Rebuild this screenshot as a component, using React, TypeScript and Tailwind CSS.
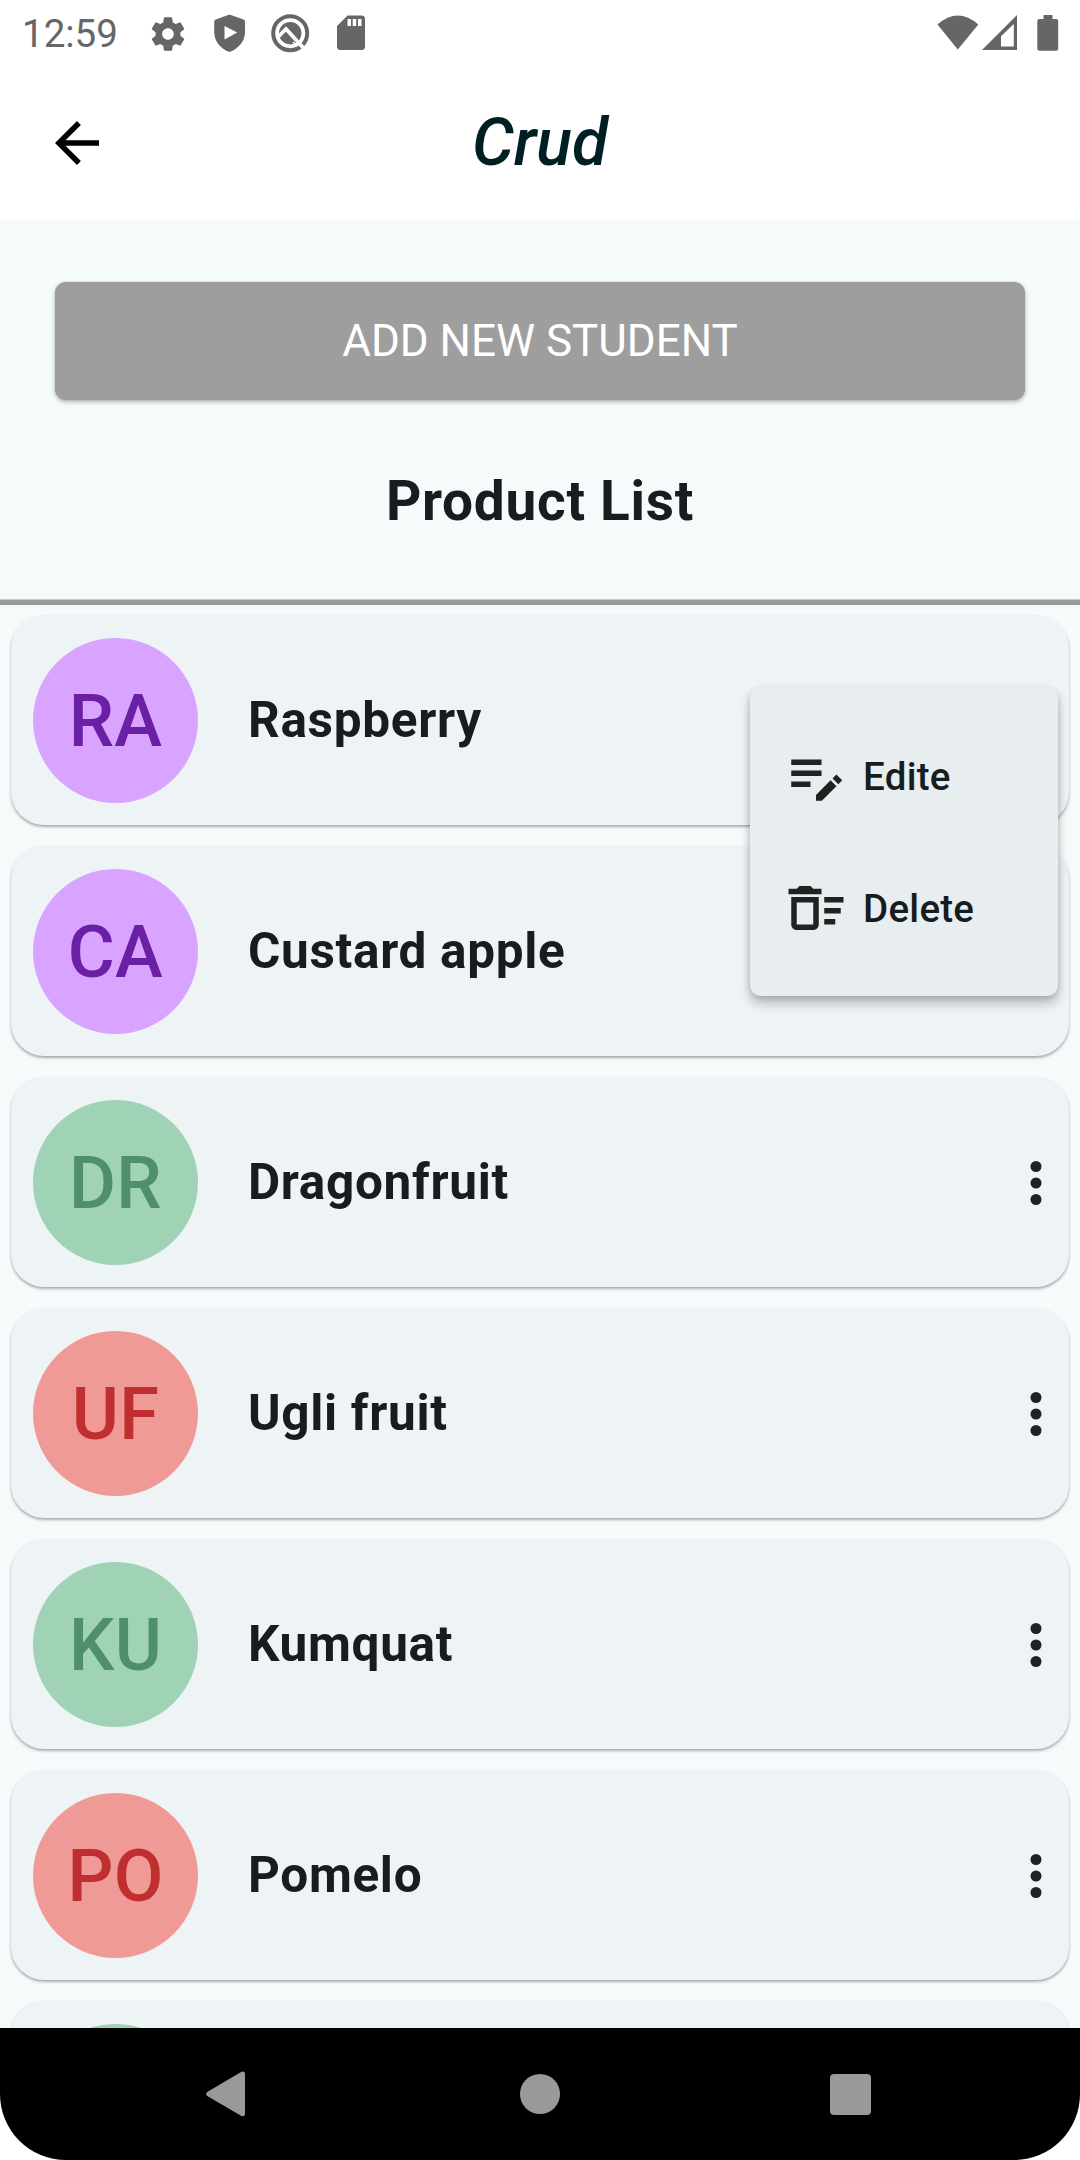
const products = [
  { initials: "RA", name: "Raspberry", tone: "bg-[#d8a4ff] text-[#6b1fa5]", menuOpen: true },
  { initials: "CA", name: "Custard apple", tone: "bg-[#d8a4ff] text-[#6b1fa5]", menuOpen: false },
  { initials: "DR", name: "Dragonfruit", tone: "bg-[#a0d2b5] text-[#4f8f69]", menuOpen: false },
  { initials: "UF", name: "Ugli fruit", tone: "bg-[#f09a98] text-[#c02f2f]", menuOpen: false },
  { initials: "KU", name: "Kumquat", tone: "bg-[#a0d2b5] text-[#4f8f69]", menuOpen: false },
  { initials: "PO", name: "Pomelo", tone: "bg-[#f09a98] text-[#c02f2f]", menuOpen: false },
  { initials: "", name: "", tone: "bg-[#a0d2b5] text-[#4f8f69]", menuOpen: false },
];

function StatusBar() {
  return (
    <div className="flex h-[66px] shrink-0 items-center bg-white pl-[22px] pr-[21px] text-[#666]">
      <span className="w-[128px] pt-[2px] text-[38.500px] leading-[64px]">12:59</span>
      <svg width="40" height="40" viewBox="0 0 24 24" fill="currentColor" className="-ml-[2px] mt-px">
        <path d="M19.43 12.98c.04-.32.07-.64.07-.98s-.03-.66-.07-.98l2.11-1.65c.19-.15.24-.42.12-.64l-2-3.46c-.12-.22-.39-.3-.61-.22l-2.49 1c-.52-.4-1.08-.73-1.69-.98l-.38-2.65C14.46 2.18 14.25 2 14 2h-4c-.25 0-.46.18-.49.42l-.38 2.65c-.61.25-1.17.59-1.69.98l-2.49-1c-.23-.09-.49 0-.61.22l-2 3.46c-.13.22-.07.49.12.64l2.11 1.65c-.04.32-.07.65-.07.98s.03.66.07.98l-2.11 1.65c-.19.15-.24.42-.12.64l2 3.46c.12.22.39.3.61.22l2.49-1c.52.4 1.08.73 1.69.98l.38 2.65c.03.24.24.42.49.42h4c.25 0 .46-.18.49-.42l.38-2.65c.61-.25 1.17-.59 1.69-.98l2.49 1c.23.09.49 0 .61-.22l2-3.46c.12-.22.07-.49-.12-.64l-2.11-1.65zM12 15.5c-1.93 0-3.5-1.57-3.5-3.5s1.57-3.5 3.5-3.5 3.5 1.57 3.5 3.5-1.57 3.5-3.5 3.5z" />
      </svg>
      <svg width="32" height="38" viewBox="0 0 32 38" fill="currentColor" fillRule="evenodd" className="ml-[26px]">
        <path d="M15.5 0.4 L29.5 5.6 Q31 6.2 31 7.8 V18 C31 27.500 24 35 15.500 38 C7 35 0.2 27.500 0.2 18 V7.800 Q0.2 6.200 1.700 5.600 Z M10.500 12 V25.500 L23.200 18.600 Z" />
      </svg>
      <svg width="40" height="40" viewBox="0 0 40 40" fill="none" className="ml-[25px] mt-px">
        <circle cx="19.2" cy="19.2" r="17" stroke="currentColor" strokeWidth="4" />
        <circle cx="19.2" cy="19.2" r="11.2" fill="currentColor" />
        <path d="M6.500 23.500 L15 15 L32 33.500" stroke="#fff" strokeWidth="3.800" />
        <path d="M22 28 L25.500 31.500 L30.500 26.500" stroke="#fff" strokeWidth="1.500" />
      </svg>
      <svg width="28" height="36" viewBox="0 0 28 36" fill="currentColor" fillRule="evenodd" className="ml-[26px]">
        <path d="M10.500 0.500 H24.500 Q28 0.500 28 4 V31.500 Q28 35 24.500 35 H3.500 Q0 35 0 31.500 V11 Z M10.500 4 V11 H14 V4 Z M15.700 4 V11 H19.200 V4 Z M21 4 V11 H24.500 V4 Z" />
      </svg>
      <div className="ml-auto flex items-center">
        <svg width="42" height="36" viewBox="0 0 42 36" fill="currentColor">
          <path d="M0.500 9.500 Q20.800 -8.500 41.300 9.500 L20.800 34.500 Z" />
        </svg>
        <svg width="36" height="36" viewBox="0 0 36 36" fill="currentColor" fillRule="evenodd" className="ml-[3px]">
          <path d="M35 0 V35 H0 Z M31.800 9 L19 21.300 V31.500 H31.800 Z" />
        </svg>
        <svg width="22" height="36" viewBox="0 0 22 36" fill="currentColor" className="ml-[19px]">
          <path d="M6.500 0 H15.500 V4 H19 Q21.200 4 21.200 6.200 V33.500 Q21.200 35.700 19 35.700 H2.500 Q0.300 35.700 0.300 33.500 V6.200 Q0.300 4 2.500 4 H6.500 Z" />
        </svg>
      </div>
    </div>
  );
}

function Header() {
  return (
    <header className="grid h-[154px] shrink-0 grid-cols-[200px_1fr_200px] items-center bg-white">
      <svg width="66" height="66" viewBox="0 0 24 24" fill="#000" className="ml-[44px]">
        <path d="M20 11H7.830l5.590-5.590L12 4l-8 8 8 8 1.410-1.410L7.830 13H20v-2z" />
      </svg>
      <h1 className="text-center text-[66px] font-medium italic leading-[78px] text-[#001f24]">Crud</h1>
    </header>
  );
}

function OptionsMenu() {
  return (
    <div className="absolute right-[11px] top-[72px] z-10 flex h-[309px] w-[308px] flex-col justify-center rounded-[11px] bg-[#e8edf0] pl-[33px] text-[38.500px] font-medium tracking-[0.270px] text-[#171d1e] shadow-[0_8px_12px_rgba(0,0,0,0.22),0_2px_6px_rgba(0,0,0,0.14)]">
      <button className="flex h-[132px] items-center gap-[14px]">
        <svg width="66" height="66" viewBox="0 0 24 24" fill="#202221">
          <path d="M3 10h11v2H3v-2zm0-2h11V6H3v2zm0 8h7v-2H3v2zM18.010 12.870l1.410-1.410 2.120 2.120-1.410 1.410-2.120-2.120zM17.300 13.580l-5.300 5.300V21h2.120l5.300-5.300-2.120-2.120z" />
        </svg>
        <span className="pt-[2px]">Edite</span>
      </button>
      <button className="flex h-[132px] items-center gap-[14px]">
        <svg width="66" height="66" viewBox="0 0 24 24" fill="#202221">
          <path d="M15 16h4v2h-4v-2zm0-8h7v2h-7V8zm0 4h6v2h-6v-2zM3 18c0 1.100.900 2 2 2h6c1.100 0 2-.900 2-2V8H3v10zm2-8h6v8H5v-8zm5-6H6L5 5H2v2h12V5h-3l-1-1z" />
        </svg>
        <span className="pt-[2px]">Delete</span>
      </button>
    </div>
  );
}

function ProductCard({ product }: { product: (typeof products)[number] }) {
  return (
    <li className="relative flex h-[210px] shrink-0 items-center rounded-[33px] bg-[#eef3f6] pl-[22px] shadow-[0_2px_3px_rgba(0,0,0,0.28),0_1px_2px_rgba(0,0,0,0.08)]">
      <div className={`flex size-[165px] items-center justify-center rounded-full pt-[4px] text-[72px] font-medium tracking-[0.300px] ${product.tone}`}>
        {product.initials}
      </div>
      <span className="ml-[50px] text-[49.500px] font-bold tracking-[0.680px] text-[#171d1e]">{product.name}</span>
      {product.menuOpen ? (
        <OptionsMenu />
      ) : (
        <svg width="66" height="66" viewBox="0 0 24 24" fill="#202221" className="ml-auto mt-[2px]">
          <circle cx="12" cy="6" r="2" />
          <circle cx="12" cy="12" r="2" />
          <circle cx="12" cy="18" r="2" />
        </svg>
      )}
    </li>
  );
}

function NavigationBar() {
  return (
    <div className="shrink-0 bg-white">
      <nav className="flex h-[132px] items-center rounded-b-[66px] bg-black pl-[206px]">
        <svg width="40" height="46" viewBox="0 0 40 46" fill="#999">
          <path d="M1.200 21 L35.500 0.800 Q39 -0.500 39 3 V43 Q39 46 35.500 45 L1.200 25 Q-0.800 23 1.200 21 Z" />
        </svg>
        <div className="ml-[274px] size-10 rounded-full bg-[#999]" />
        <div className="ml-[270px] size-[41px] rounded-[4px] bg-[#999]" />
      </nav>
    </div>
  );
}

export default function App() {
  return (
    <div className="flex h-[2160px] w-[1080px] flex-col overflow-hidden bg-[#f5fafb] font-[Roboto,sans-serif]">
      <StatusBar />
      <Header />
      <main className="flex min-h-0 flex-1 flex-col overflow-hidden">
        <button className="mx-[55px] mt-[62px] h-[118px] shrink-0 rounded-[11px] bg-[#9e9e9e] text-[44px] text-white shadow-[0_2px_4px_rgba(0,0,0,0.28),0_0_2px_rgba(0,0,0,0.12)]">
          ADD NEW STUDENT
        </button>
        <h2 className="mt-[62px] h-[78px] shrink-0 text-center text-[55px] font-bold leading-[78px] tracking-[0.700px] text-[#171d1e]">
          Product List
        </h2>
        <div className="mt-[59px] h-[6px] shrink-0 border-t border-[#c4c9ca] bg-[#969b9c]" />
        <ul className="flex flex-col gap-[21px] px-[11px] pt-[10px]">
          {products.map((product) => (
            <ProductCard key={product.initials} product={product} />
          ))}
        </ul>
      </main>
      <NavigationBar />
    </div>
  );
}
